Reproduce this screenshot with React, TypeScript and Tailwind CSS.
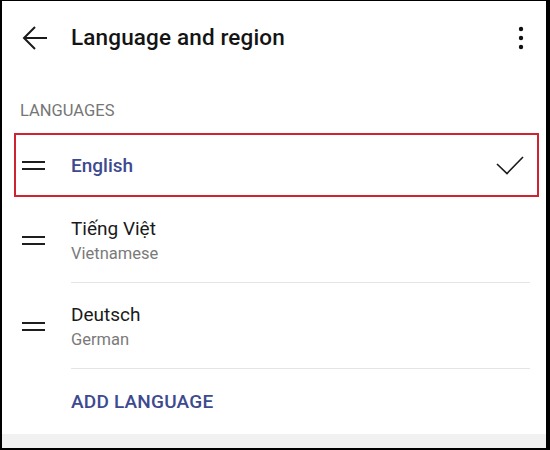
import React from 'react';

const languages = [
  { name: 'Tiếng Việt', sub: 'Vietnamese' },
  { name: 'Deutsch', sub: 'German' },
];

function DragHandle() {
  return (
    <div className="flex flex-col gap-[5px] w-[23px] shrink-0">
      <div className="h-[2px] bg-[#1e1e1e]" />
      <div className="h-[2px] bg-[#1e1e1e]" />
    </div>
  );
}

export default function App() {
  return (
    <div className="w-[550px] h-[450px] bg-black pt-px pl-[2px] pr-[4px] pb-[2px] font-['Roboto',sans-serif]">
      <div className="w-full h-full bg-white flex flex-col">
        {/* Header */}
        <div className="h-[74px] flex items-center pl-[20px] pr-[22px] shrink-0">
          <svg width="26" height="26" viewBox="0 0 26 26" className="shrink-0">
            <path d="M2 13 H25 M13 2 L2 13 L13 24" fill="none" stroke="#1a1a1a" strokeWidth="2" />
          </svg>
          <h1 className="ml-[23px] text-[22.5px] font-medium text-[#141414] tracking-[0.15px]">Language and region</h1>
          <svg width="6" height="24" viewBox="0 0 6 24" className="ml-auto">
            <circle cx="3" cy="3" r="2.2" fill="#111" />
            <circle cx="3" cy="12" r="2.2" fill="#111" />
            <circle cx="3" cy="21" r="2.2" fill="#111" />
          </svg>
        </div>

        {/* Section label */}
        <div className="mt-[26px] pl-[18px] h-[20px] leading-[20px] text-[16.5px] text-[#767676]">LANGUAGES</div>

        {/* Selected language */}
        <div className="mt-[12px] ml-[12px] mr-[7px] h-[64px] border-2 border-[#cf2330] flex items-center pl-[6px] pr-[13px]">
          <DragHandle />
          <span className="ml-[26px] pt-[2px] text-[19px] font-medium text-[#3d4a8f]">English</span>
          <svg width="28" height="20" viewBox="0 0 28 20" className="ml-auto">
            <path d="M1 9 L11 18.5 L27 2" fill="none" stroke="#1a1a1a" strokeWidth="1.6" />
          </svg>
        </div>

        {/* Other languages */}
        {languages.map(lang => (
          <div key={lang.name} className="h-[86px] flex items-center pl-[20px] shrink-0">
            <DragHandle />
            <div className="ml-[26px] flex-1 h-full flex flex-col justify-center border-b border-[#e4e4e4] mr-[16px] pt-[3px]">
              <span className="text-[19px] leading-[25px] text-[#1a1a1a]">{lang.name}</span>
              <span className="text-[16.5px] leading-[26px] text-[#7a7a7a]">{lang.sub}</span>
            </div>
          </div>
        ))}

        {/* Add language */}
        <div className="flex-1 flex items-center pl-[69px] pt-[2px]">
          <span className="text-[19px] font-medium text-[#3d4a8f] tracking-[0.2px]">ADD LANGUAGE</span>
        </div>

        <div className="h-[14px] bg-[#f1f1f1] shrink-0" />
      </div>
    </div>
  );
}
